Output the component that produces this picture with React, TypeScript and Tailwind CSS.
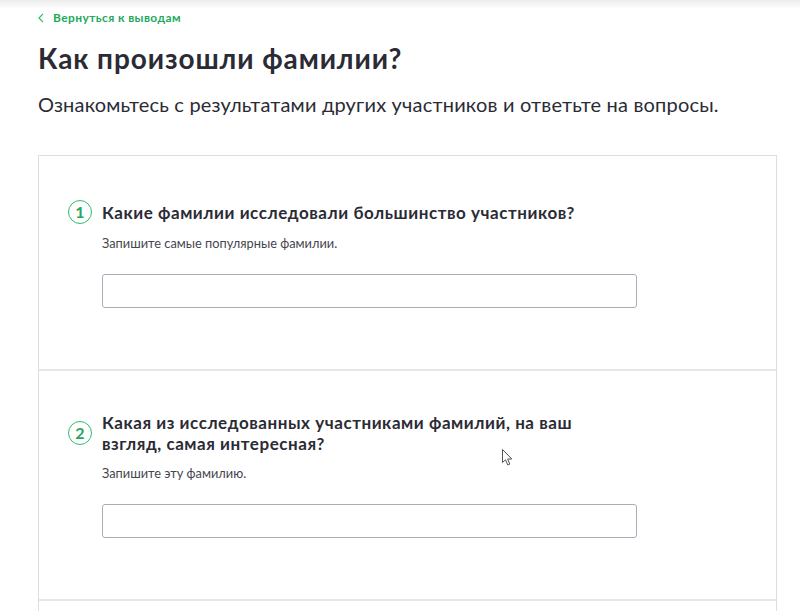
import React from "react";

const font = { fontFamily: "Lato, 'Noto Sans', sans-serif" };

function Question({
  n,
  lines,
  hint,
  pt,
  inputMt,
}: {
  n: string;
  lines: string[];
  hint: string;
  pt: string;
  inputMt: string;
}) {
  return (
    <div className={`pl-[29px] pb-[61px] ${pt}`}>
      <div className="flex items-center gap-[10px]">
        <div className="w-[24px] h-[24px] rounded-full border-[1.5px] border-[#2ebd70] flex items-center justify-center text-[#22a85d] text-[16px] font-bold leading-none shrink-0">
          {n}
        </div>
        <div className="text-[17px] font-bold leading-[21px] tracking-[0.55px] text-[#2b2b35]">
          {lines.map((l, i) => (
            <div key={i}>{l}</div>
          ))}
        </div>
      </div>
      <div className="ml-[34px] mt-[10px] text-[12.8px] leading-[18px] text-[#45454f]">
        {hint}
      </div>
      <div className={`ml-[34px] ${inputMt} w-[535px] h-[34px] border border-[#aeabb9] rounded-[3px] bg-white`} />
    </div>
  );
}

export default function App() {
  return (
    <div
      className="relative w-[800px] h-[611px] overflow-hidden bg-white"
      style={font}
    >
      <div className="absolute top-0 left-0 right-0 h-[9px] bg-gradient-to-b from-[#ececec] to-white" />
      <div className="relative px-[38px] pt-[10px]">
        <div className="flex items-center gap-[9px] h-[15px]">
          <svg width="6" height="10" viewBox="0 0 6 10" className="shrink-0">
            <path d="M5 0.8 L1 5 L5 9.2" fill="none" stroke="#2dbd6e" strokeWidth="1.2" />
          </svg>
          <span className="text-[12px] font-bold tracking-[0.4px] text-[#1faa5c] leading-[15px]">
            Вернуться к выводам
          </span>
        </div>
        <h1 className="mt-[16px] text-[28px] font-bold leading-[34px] tracking-[0.9px] text-[#2b2b35]">
          Как произошли фамилии?
        </h1>
        <p className="mt-[17px] text-[20px] leading-[24px] tracking-[0.18px] text-[#2b2b35]">
          Ознакомьтесь с результатами других участников и ответьте на вопросы.
        </p>
        <div className="mt-[39px] w-[739px] border border-[#dedede] border-b-0">
          <Question
            n="1"
            pt="pt-[44px]"
            inputMt="mt-[22px]"
            lines={["Какие фамилии исследовали большинство участников?"]}
            hint="Запишите самые популярные фамилии."
          />
          <div className="h-[2px] bg-[#e6e6e6]" />
          <Question
            n="2"
            pt="pt-[41px]"
            inputMt="mt-[22px]"
            lines={[
              "Какая из исследованных участниками фамилий, на ваш",
              "взгляд, самая интересная?",
            ]}
            hint="Запишите эту фамилию."
          />
          <div className="h-[2px] bg-[#e6e6e6]" />
          <div className="h-[40px]" />
        </div>
      </div>
      <svg
        className="absolute left-[502px] top-[449px]"
        width="12"
        height="18"
        viewBox="0 0 12 18"
      >
        <path
          d="M0.5 0.5 L0.5 13.5 L3.5 10.8 L5.8 16 L7.8 15.1 L5.6 10 L9.8 10 Z"
          fill="white"
          stroke="#555"
          strokeWidth="1"
        />
      </svg>
    </div>
  );
}
